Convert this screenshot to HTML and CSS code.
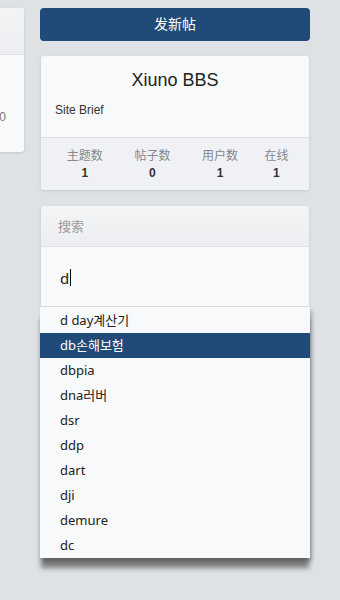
FILE: index.html
```html
<!DOCTYPE html>
<html lang="zh">
<head>
    <meta charset="UTF-8">
    <meta name="viewport" content="width=device-width, initial-scale=1.0">
    <title>Xiuno BBS</title>
    <link rel="stylesheet" href="styles.css">
</head>
<body>
    <div class="main">
        <div class="col-left">
            <div class="card threads">
                <div class="card-header"></div>
                <div class="card-body">
                    <span class="count">0</span>
                </div>
            </div>
        </div>

        <div class="col-right">
            <a class="btn-post" href="#">发新帖</a>

            <div class="card site">
                <div class="card-body">
                    <h4 class="site-name">Xiuno BBS</h4>
                    <p class="site-brief">Site Brief</p>
                </div>
                <div class="stats">
                    <div class="stat"><span>主题数</span><b>1</b></div>
                    <div class="stat"><span>帖子数</span><b>0</b></div>
                    <div class="stat"><span>用户数</span><b>1</b></div>
                    <div class="stat"><span>在线</span><b>1</b></div>
                </div>
            </div>

            <div class="card search">
                <div class="card-header">搜索</div>
                <div class="search-body">
                    <div class="search-input">d<span class="caret"></span></div>
                </div>
            </div>
            <div class="suggest">
                <div class="suggest-item">d day계산기</div>
                <div class="suggest-item active">db손해보험</div>
                <div class="suggest-item">dbpia</div>
                <div class="suggest-item">dna러버</div>
                <div class="suggest-item">dsr</div>
                <div class="suggest-item">ddp</div>
                <div class="suggest-item">dart</div>
                <div class="suggest-item">dji</div>
                <div class="suggest-item">demure</div>
                <div class="suggest-item">dc</div>
            </div>
        </div>
    </div>
</body>
</html>
```

FILE: styles.css
```css
body {
    margin: 0;
    min-height: 600px;
    background-color: #dfe2e5;
    font-family: 'Liberation Sans', 'Noto Sans CJK SC', sans-serif;
    color: #222;
}

.main {
    display: flex;
    gap: 16px;
    padding: 8px 30px 40px 0;
}

.col-left {
    flex: 0 0 220px;
    margin-left: -196px;
}

.col-right {
    flex: 0 0 270px;
}

.card {
    background: #f7f9fb;
    border-radius: 3px;
    box-shadow: 0 1px 3px rgba(0, 0, 0, 0.12);
}

.card-header {
    height: 46px;
    background: linear-gradient(#f3f4f6, #eceef1);
    border-bottom: 1px solid #dcdfe3;
    border-radius: 3px 3px 0 0;
}

/* left column card */
.threads .card-body {
    height: 97px;
    padding: 52px 18px 0 0;
    text-align: right;
    box-sizing: border-box;
}

.threads .count {
    font-size: 12px;
    line-height: 16px;
    color: #777;
}

.btn-post {
    display: block;
    height: 33px;
    line-height: 33px;
    text-align: center;
    background-color: #204a77;
    color: #fff;
    font-size: 14px;
    text-decoration: none;
    border-radius: 4px;
}

.site {
    margin: 15px 1px 0;
}

.site .card-body {
    padding: 12px 14px 18px;
}

.site-name {
    margin: 0;
    text-align: center;
    font-size: 18px;
    font-weight: normal;
    line-height: 24px;
    color: #222;
}

.site-brief {
    margin: 9px 0 0;
    font-size: 12px;
    line-height: 18px;
    color: #333;
}

.stats {
    display: grid;
    grid-template-columns: 3fr 3fr 3fr 2fr;
    padding: 9px 10px 9px;
    background: #eff1f4;
    border-top: 1px solid #d9dce0;
    border-radius: 0 0 3px 3px;
    text-align: center;
}

.stat span {
    display: block;
    font-size: 12px;
    line-height: 18px;
    color: #888;
}

.stat b {
    display: block;
    font-size: 12px;
    line-height: 16px;
    color: #333;
}

.search {
    margin: 16px 1px 0;
    border-radius: 3px 3px 0 0;
}

.search .card-header {
    height: 41px;
    line-height: 41px;
    padding-left: 17px;
    font-size: 13px;
    color: #9a9a9a;
    box-sizing: border-box;
}

.search-body {
    height: 60px;
    display: flex;
    align-items: center;
    padding: 2px 0 0 19px;
    border-bottom: 1px solid #dcdfe3;
    box-sizing: border-box;
}

.search-input {
    font-family: 'Noto Sans', sans-serif;
    font-size: 15px;
    line-height: 18px;
    color: #222;
    display: flex;
    align-items: center;
}

.caret {
    display: inline-block;
    width: 1px;
    height: 17px;
    background: #000;
    margin-left: 1px;
}

.suggest {
    padding-top: 1px;
    background: #f7f9fb;
    box-shadow: 0 11px 5px -1px rgba(0, 0, 0, 0.45), 2px 3px 4px rgba(0, 0, 0, 0.25);
}

.suggest-item {
    height: 25px;
    line-height: 25px;
    padding-left: 20px;
    font-family: 'Noto Sans', 'Noto Sans CJK KR', sans-serif;
    font-size: 13px;
    color: #222;
}

.suggest-item.active {
    background-color: #204a77;
    color: #fff;
}
```
